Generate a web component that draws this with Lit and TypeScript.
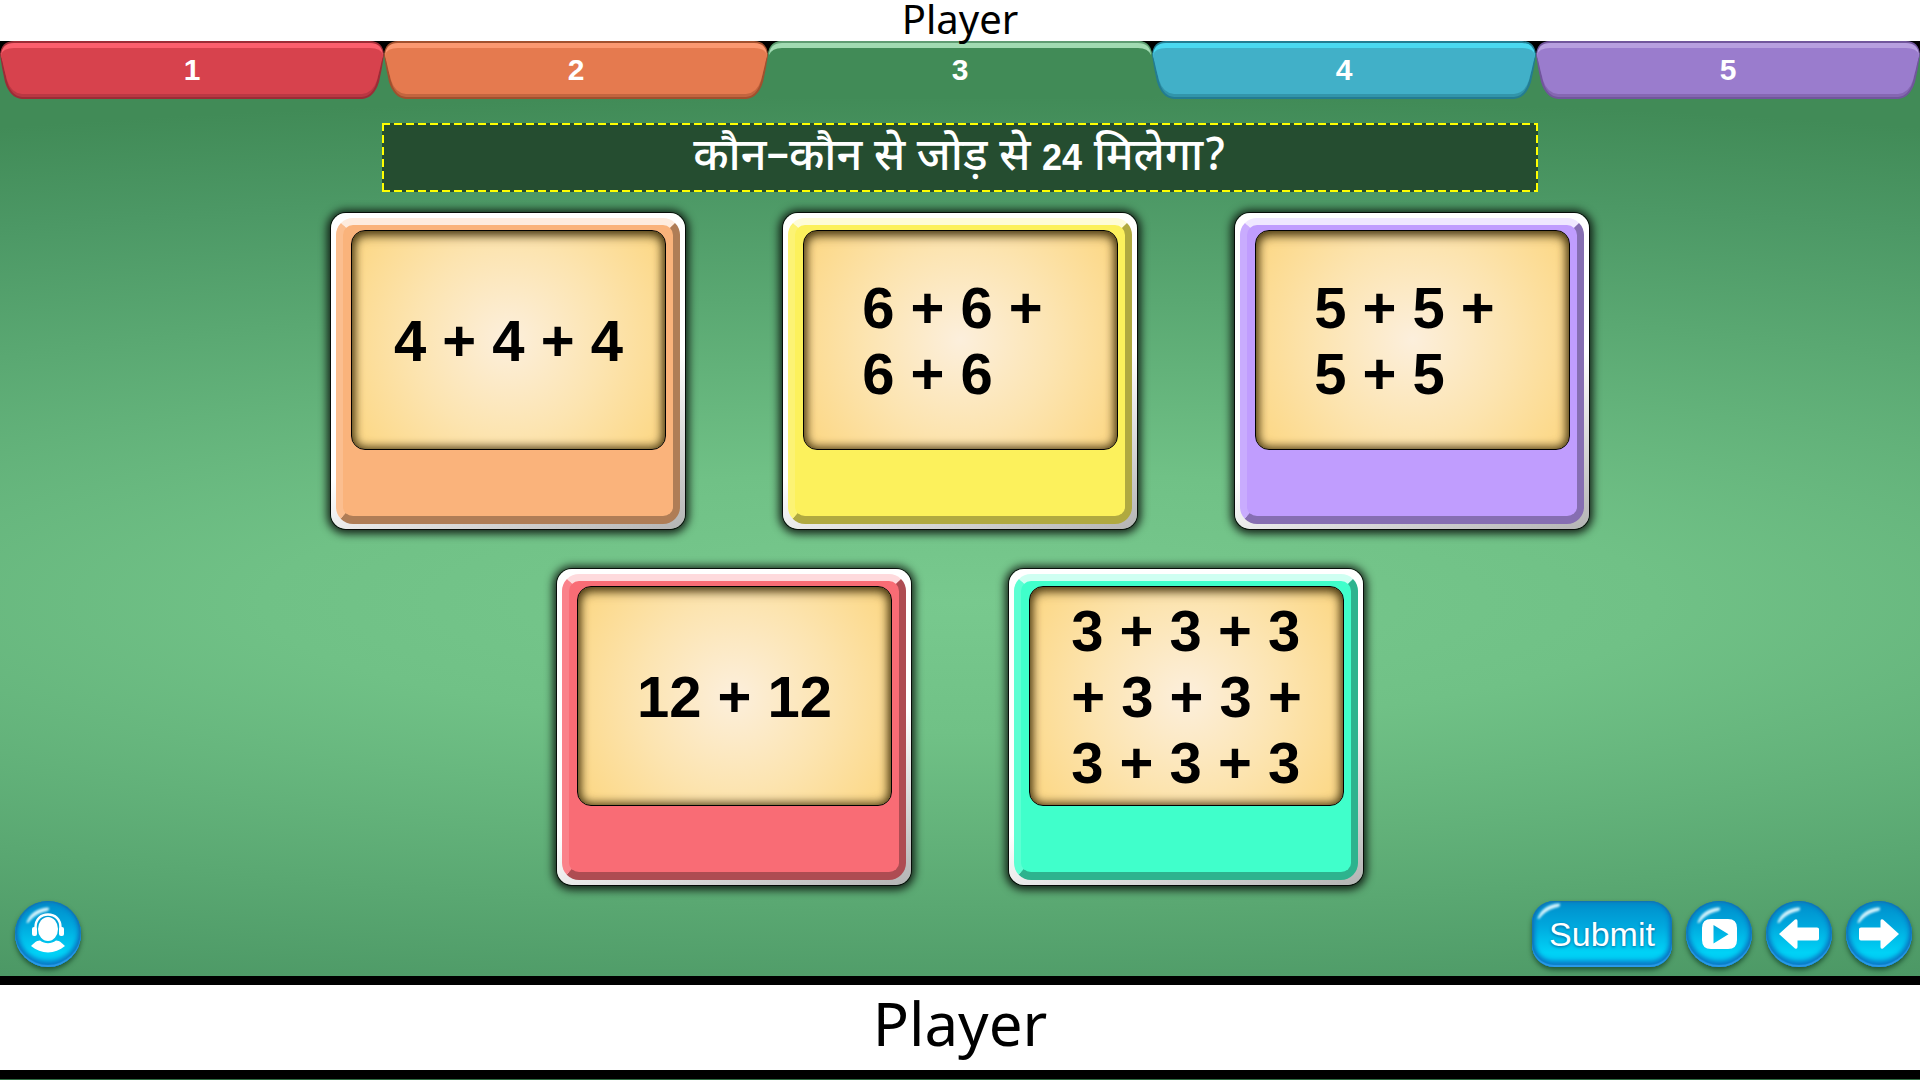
import { LitElement, html, css, svg } from "lit";
import { customElement, state, property } from "lit/decorators.js";

interface Tab {
  id: number;
  tone: string;
}

interface Answer {
  lines: string[];
  tone: string;
}

const TABS: Tab[] = [
  { id: 1, tone: "red" },
  { id: 2, tone: "orange" },
  { id: 3, tone: "green" },
  { id: 4, tone: "blue" },
  { id: 5, tone: "purple" },
];

const ROWS: Answer[][] = [
  [
    { lines: ["4 + 4 + 4"], tone: "peach" },
    { lines: ["6 + 6 + ", "6 + 6"], tone: "yellow" },
    { lines: ["5 + 5 + ", "5 + 5"], tone: "lilac" },
  ],
  [
    { lines: ["12 + 12"], tone: "rose" },
    { lines: ["3 + 3 + 3", "+ 3 + 3 +", "3 + 3 + 3"], tone: "mint" },
  ],
];

const ICONS = {
  support: svg`
    <ellipse cx="33" cy="28" rx="10" ry="12"/>
    <path d="M20.500 29V26.500C20.500 18 26 13.500 33 13.500S45.500 18 45.500 26.500V29" fill="none" stroke="#fff" stroke-width="2.500"/>
    <rect x="17" y="26" width="5" height="9" rx="2"/>
    <rect x="44" y="26" width="5" height="9" rx="2"/>
    <path d="M16 45C19 42.500 21 39.500 25 39.500C30 43 36 43 41 39.500C45 39.500 47 42.500 50 45C40 53.500 26 53.500 16 45Z"/>`,
  play: svg`
    <path fill-rule="evenodd" d="M25 18H42Q51 18 51 27V39Q51 48 42 48H25Q16 48 16 39V27Q16 18 25 18ZM27.500 24V42.500L42.500 33.300Z"/>`,
  prev: svg`
    <path d="M13 33L29 18.500Q31.500 17.500 31.500 20V26.500H51Q53 26.500 53 28V37.500Q53 39.500 51 39.500H31.500V46Q31.500 48.500 29 47.500Z"/>`,
  next: svg`
    <path d="M53 33L37 18.500Q34.500 17.500 34.500 20V26.500H15Q13 26.500 13 28V37.500Q13 39.500 15 39.500H34.500V46Q34.500 48.500 37 47.500Z"/>`,
};

@customElement("player-button")
class PlayerButton extends LitElement {
  @property() icon = "";
  @property() label = "";

  static styles = css`
    :host {
      display: block;
      flex: none;
    }
    .btn {
      position: relative;
      display: block;
      height: 66px;
      min-width: 66px;
      padding: 0;
      border: 0;
      border-radius: 33px;
      color: #fff;
      cursor: pointer;
      font: 34px/66px "Liberation Sans", Arial, sans-serif;
      background: linear-gradient(#0090cc 4%, #00a6dc 35%, #00d2f6 78%, #00c8f2);
      box-shadow:
        inset 0 -2px 1px #2a9bea,
        inset 0 0 2px 1px #1470ae,
        inset 0 -4px 5px 2px #0a7cc8,
        inset 0 0 5px 2px #0a86c6,
        0 3px 5px rgba(0, 40, 20, 0.6);
    }
    .wide {
      width: 140px;
      border-radius: 22px;
      text-shadow: 0 1px 3px #04649c;
    }
    .icon,
    .glare {
      display: block;
      width: 66px;
      height: 66px;
    }
    .icon {
      fill: #fff;
      position: relative;
    }
    .glare {
      position: absolute;
      left: 0;
      top: 0;
      filter: blur(1px);
    }
    .wide .glare {
      top: -4px;
      left: -6px;
    }
  `;

  render() {
    const glare = html`<svg class="glare" viewBox="0 0 66 66" aria-hidden="true">
      <path d="M11.500 21.500C14 13 23 6.500 33.500 6.500Q35 8.500 32.500 10C24 11.500 18 16 13.500 21.500Q12 22.500 11.500 21.500Z" fill="#d2f2fb"/>
    </svg>`;
    if (!this.icon) {
      return html`<button class="btn wide" type="button">${glare}${this.label}</button>`;
    }
    return html`<button class="btn" type="button" aria-label=${this.label}>
      ${glare}
      <svg class="icon" viewBox="0 0 66 66" aria-hidden="true">${ICONS[this.icon as keyof typeof ICONS]}</svg>
    </button>`;
  }
}

@customElement("answer-card")
class AnswerCard extends LitElement {
  @property({ attribute: false }) answer!: Answer;

  static styles = css`
    :host {
      display: block;
    }
    .card {
      display: block;
      width: 354px;
      padding: 5px;
      border: 0;
      border-radius: 15px;
      cursor: pointer;
      background: linear-gradient(160deg, #fff 60%, #b4b4b4);
      box-shadow:
        0 0 0 1px rgba(0, 0, 0, 0.8),
        0 1px 8px 4px rgba(0, 0, 0, 0.8);
    }
    .face {
      display: block;
      height: 306px;
      box-sizing: border-box;
      padding: 5px 7px 0 8px;
      border: 7px solid;
      border-bottom-width: 8px;
      border-radius: 17px;
      border-color: color-mix(in srgb, var(--tone) 25%, white)
        color-mix(in srgb, var(--tone) 70%, black)
        color-mix(in srgb, var(--tone) 70%, black)
        color-mix(in srgb, var(--tone) 85%, white);
      background: var(--tone);
    }
    .screen {
      display: flex;
      align-items: center;
      justify-content: center;
      box-sizing: border-box;
      height: 220px;
      padding-top: 2px;
      border: 1px solid #000;
      border-radius: 14px;
      background: radial-gradient(circle at center, #fcefdc, #fce4b0 50%, #fcd98a 90%);
      box-shadow:
        inset 0 0 10px 2px rgba(50, 35, 0, 0.75),
        inset 0 4px 12px rgba(50, 35, 0, 0.65);
      color: #000;
      font: bold 58px/66px "Liberation Sans", Arial, sans-serif;
      text-align: left;
      white-space: pre;
    }
    .line {
      display: block;
    }
    .peach { --tone: #fab37b; }
    .yellow { --tone: #fcf15c; }
    .lilac { --tone: #c09dfe; }
    .rose { --tone: #f96c75; }
    .mint { --tone: #40ffcb; }
  `;

  render() {
    const lines = this.answer.lines.map((line) => html`<span class="line">${line}</span>`);
    return html`<button class="card ${this.answer.tone}" type="button">
      <span class="face"><span class="screen"><span>${lines}</span></span></span>
    </button>`;
  }
}

@customElement("app-root")
class AppRoot extends LitElement {
  @state() private active = 3;

  static styles = css`
    :host {
      display: block;
      font-family: "Liberation Sans", Arial, sans-serif;
    }
    .page {
      display: flex;
      flex-direction: column;
      min-height: 100vh;
      background: #fff;
    }
    .title {
      position: relative;
      z-index: 1;
      margin: 0;
      height: 41px;
      text-align: center;
      font: 40px/38px "Noto Sans", sans-serif;
      color: #000;
    }
    .stage {
      flex: 1;
      display: flex;
      flex-direction: column;
      background: radial-gradient(ellipse 145% 56% at 50% 60%, #78c98e, #70c186 25%, #5aa872 58%, #4c9865 79%, #418b57 97%);
    }
    .tabs {
      display: flex;
      background: linear-gradient(#000 12px, transparent 12px);
    }
    .tab {
      flex: 1;
      position: relative;
      height: 58px;
      padding: 0;
      border: 0;
      background: none;
      color: #fff;
      font: bold 30px/56px "Liberation Sans", Arial, sans-serif;
      cursor: pointer;
    }
    .shape {
      position: absolute;
      left: 0;
      top: 0;
      width: 100%;
      height: 58px;
    }
    .num {
      position: relative;
    }
    .edge { fill: var(--edge); }
    .low { fill: var(--low); }
    .shine { fill: var(--shine); }
    .body { fill: var(--body); }
    .red { --edge: #9c2c36; --low: #b93843; --shine: #fb5f6d; --body: #d7424d; }
    .orange { --edge: #a1502e; --low: #c2653f; --shine: #fb9870; --body: #e57a4f; }
    .green { --edge: #5f9c72; --low: #418b57; --shine: #a1dbb2; --body: #418b57; }
    .blue { --edge: #237c92; --low: #3295aa; --shine: #4bd8f0; --body: #41b0c8; }
    .purple { --edge: #71569c; --low: #8567b2; --shine: #b79fdf; --body: #9a7ccd; }
    .question {
      align-self: center;
      box-sizing: border-box;
      width: 60.250%;
      height: 69px;
      margin: 24px 0 21px;
      text-align: center;
      color: #fff;
      font: 500 45px/72px "Noto Sans Devanagari", "Lohit Devanagari", "Noto Sans", sans-serif;
      background:
        repeating-linear-gradient(90deg, #ff0 0 8px, transparent 8px 12px) top / 100% 2px no-repeat,
        repeating-linear-gradient(90deg, #ff0 0 8px, transparent 8px 12px) bottom / 100% 2px no-repeat,
        repeating-linear-gradient(#ff0 0 8px, transparent 8px 12px) left / 2px 100% no-repeat,
        repeating-linear-gradient(#ff0 0 8px, transparent 8px 12px) right / 2px 100% no-repeat,
        #254d30;
    }
    .figure {
      font: bold 36px/60px "Liberation Sans", Arial, sans-serif;
    }
    .answers {
      display: flex;
      flex-direction: column;
      gap: 40px;
    }
    .row {
      display: flex;
      justify-content: center;
      gap: 98px;
    }
    .controls {
      display: flex;
      justify-content: flex-end;
      gap: 14px;
      margin-top: auto;
      padding: 16px 8px 9px 15px;
    }
    .first {
      margin-right: auto;
    }
    .footer {
      border: solid #000;
      border-width: 9px 0;
      height: 85px;
      text-align: center;
      font: 60px/76px "Noto Sans", sans-serif;
      color: #000;
      background: #fff;
    }
    .base {
      padding-bottom: 1px;
      background: #2f6b42;
    }
  `;

  private tab(t: Tab) {
    const on = t.id === this.active;
    return html`<button
      class="tab ${t.tone}"
      type="button"
      role="tab"
      aria-selected=${on ? "true" : "false"}
      @click=${() => (this.active = t.id)}
    >
      <svg class="shape" viewBox="0 0 384 58" preserveAspectRatio="none" aria-hidden="true">
        ${on
          ? svg`
            <path class="body" d="M0 58V12Q2 0 14 0H370Q382 0 384 12V58Z"/>
            <path class="edge" d="M0 14Q2 0 14 0H370Q382 0 384 14L380 6H4Z"/>
            <path class="shine" d="M1 14Q2 2 14 2H370Q382 2 383 14Q380 7 370 7H14Q4 7 1 14Z"/>`
          : svg`
            <path class="edge" d="M0 14Q1 0 14 0H370Q383 0 384 14Q382 28 379 41Q374 57 362 58H22Q10 57 5 41Q2 28 0 14Z"/>
            <path class="low" d="M2 14Q3 2 14 2H370Q381 2 382 14Q380 28 377 40Q373 55 362 56H22Q11 55 7 40Q4 28 2 14Z"/>
            <path class="shine" d="M1 14Q2 2 14 2H370Q382 2 383 14L380 24H4Z"/>
            <path class="body" d="M1 14Q3 7 14 7H370Q381 7 383 14Q380 28 377 39Q373 52 362 53H22Q11 52 7 39Q4 28 1 14Z"/>`}
      </svg>
      <span class="num">${t.id}</span>
    </button>`;
  }

  render() {
    return html`<div class="page">
      <h1 class="title">Player</h1>
      <main class="stage">
        <nav class="tabs" role="tablist">${TABS.map((t) => this.tab(t))}</nav>
        <div class="question">कौन–कौन से जोड़ से <span class="figure">24</span> मिलेगा?</div>
        <div class="answers">
          ${ROWS.map(
            (row) => html`<div class="row">
              ${row.map((a) => html`<answer-card .answer=${a}></answer-card>`)}
            </div>`
          )}
        </div>
        <div class="controls">
          <player-button class="first" icon="support" label="Support"></player-button>
          <player-button label="Submit"></player-button>
          <player-button icon="play" label="Play"></player-button>
          <player-button icon="prev" label="Previous"></player-button>
          <player-button icon="next" label="Next"></player-button>
        </div>
      </main>
      <div class="base"><footer class="footer">Player</footer></div>
    </div>`;
  }
}
